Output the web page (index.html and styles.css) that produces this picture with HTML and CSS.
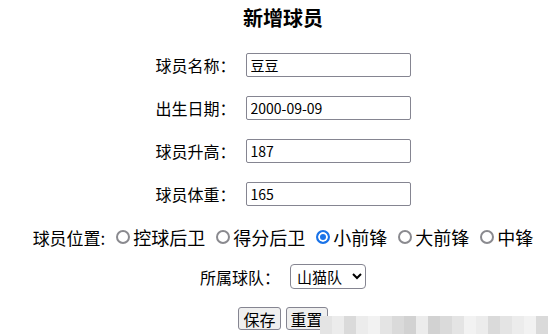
FILE: index.html
```html
<!DOCTYPE html>
<html lang="zh">
  <head>
    <meta charset="UTF-8" />
    <meta name="viewport" content="width=device-width, initial-scale=1.0" />
    <title>新增球员</title>
    <link rel="stylesheet" href="styles.css">
  </head>
  <body>
    <div id="page">
      <h3 class="title">新增球员</h3>
      <form id="playerForm">
        <div class="row">
          <label>球员名称：</label>
          <input type="text" value="豆豆" />
        </div>
        <div class="row">
          <label>出生日期：</label>
          <input type="text" value="2000-09-09" />
        </div>
        <div class="row">
          <label>球员升高：</label>
          <input type="text" value="187" />
        </div>
        <div class="row">
          <label>球员体重：</label>
          <input type="text" value="165" />
        </div>
        <div class="row radios">
          <label>球员位置:</label>
          <input type="radio" name="pos" /><span>控球后卫</span>
          <input type="radio" name="pos" /><span>得分后卫</span>
          <input type="radio" name="pos" checked /><span>小前锋</span>
          <input type="radio" name="pos" /><span>大前锋</span>
          <input type="radio" name="pos" /><span>中锋</span>
        </div>
        <div class="row team">
          <label>所属球队：</label>
          <select>
            <option>山猫队</option>
            <option>湖人队</option>
          </select>
        </div>
        <div class="row buttons">
          <button type="button">保存</button>
          <button type="reset">重置</button>
        </div>
      </form>
      <div class="mosaic">
        <i class="g1"></i><i class="g2"></i><i class="g3"></i><i class="g2"></i>
        <i class="g4"></i><i class="g1"></i><i class="g3"></i><i class="g5"></i>
        <i class="g2"></i><i class="g5"></i><i class="g3"></i><i class="g1"></i>
        <i class="g4"></i><i class="g2"></i><i class="g3"></i><i class="g1"></i>
        <i class="g2"></i><i class="g4"></i><i class="g3"></i>
      </div>
    </div>
  </body>
</html>
```

FILE: styles.css
```css
* {
  box-sizing: border-box;
}
body {
  margin: 0;
  font-family: "Noto Sans CJK SC", "Liberation Sans", sans-serif;
  color: #000;
  background: #fff;
}
#page {
  position: relative;
  width: 559px;
  height: 334px;
  padding-left: 7px;
  overflow: hidden;
}
.title {
  margin: 0;
  padding-top: 5px;
  height: 30px;
  font-size: 20px;
  line-height: 26px;
  text-align: center;
}
.row {
  display: flex;
  justify-content: center;
  align-items: center;
  height: 24px;
  margin-top: 19px;
  font-size: 16px;
}
.row:first-child {
  margin-top: 23px;
}
.row label {
  margin-right: 10px;
}
.row input[type="text"] {
  width: 165px;
  height: 24px;
  padding: 0 4px;
  border: 1px solid #858591;
  border-radius: 2px;
  font-family: "Noto Sans CJK SC", sans-serif;
  font-size: 14px;
}
.radios {
  margin-top: 19px;
  font-size: 17px;
}
.radios label {
  margin-right: 6px;
}
.radios input {
  appearance: none;
  width: 14px;
  height: 14px;
  margin: 0 3px 0 5px;
  border: 2px solid #8a8a8f;
  border-radius: 50%;
  background: #fff;
}
.radios input:checked {
  border-color: #1a73e8;
  box-shadow: inset 0 0 0 2px #fff;
  background: #1a73e8;
}
.radios span {
  margin-right: 6px;
  font-size: 18px;
}
.radios span:last-child {
  margin-right: 0;
}
.team {
  margin-top: 15px;
  height: 25px;
}
.team select {
  width: 76px;
  height: 25px;
  padding: 0 2px;
  border: 1px solid #858591;
  border-radius: 4px;
  background: #fff;
  font-family: "Noto Sans CJK SC", sans-serif;
  font-size: 15px;
}
.buttons {
  margin-top: 18px;
  height: 23px;
  gap: 5px;
}
.buttons button {
  height: 23px;
  padding: 0 4px;
  border: 1px solid #858591;
  border-radius: 3px;
  background: #efefef;
  font-family: "Noto Sans CJK SC", sans-serif;
  font-size: 16px;
  line-height: 20px;
}
.mosaic {
  position: absolute;
  left: 320px;
  top: 316px;
  display: flex;
}
.mosaic i {
  display: block;
  width: 12px;
  height: 18px;
}
.g1 { background: #e4e4e4; }
.g2 { background: #ececec; }
.g3 { background: #dadada; }
.g4 { background: #f2f2f2; }
.g5 { background: #d2d2d2; }
```
